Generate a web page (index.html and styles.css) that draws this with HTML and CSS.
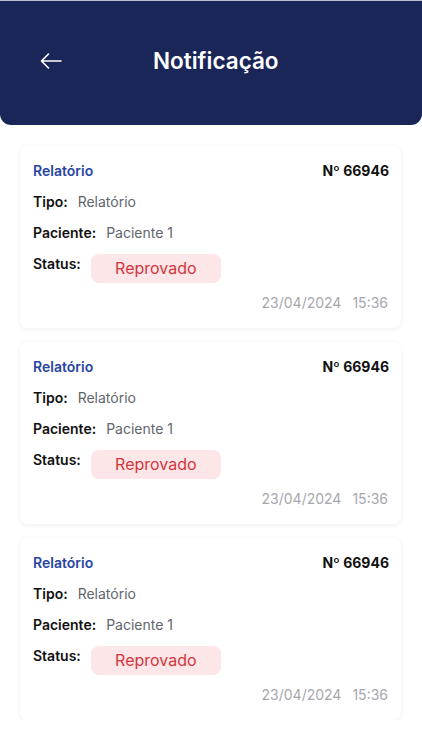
FILE: index.html
```html
<!DOCTYPE html>
<html lang="pt-BR">
<head>
  <meta charset="utf-8" />
  <meta name="viewport" content="width=device-width, user-scalable=no" />
  <title>Notificação</title>
  <link rel="stylesheet" href="styles.css">
</head>
<body>
  <header class="topo">
    <a class="voltar" href="#">
      <svg width="22" height="16" viewBox="0 0 22 16" fill="none" stroke="#fff" stroke-width="1.6" stroke-linecap="round" stroke-linejoin="round">
        <path d="M21 8H1.5M8.5 1L1.5 8l7 7" />
      </svg>
    </a>
    <h1>Notificação</h1>
  </header>

  <div class="lista">
    <div class="card">
      <div class="linha-topo">
        <span class="titulo">Relatório</span>
        <span class="numero">Nº 66946</span>
      </div>
      <div class="linha"><b>Tipo:</b><span>Relatório</span></div>
      <div class="linha"><b>Paciente:</b><span>Paciente 1</span></div>
      <div class="linha"><b>Status:</b><span class="status">Reprovado</span></div>
      <div class="data"><span>23/04/2024</span><span>15:36</span></div>
    </div>

    <div class="card">
      <div class="linha-topo">
        <span class="titulo">Relatório</span>
        <span class="numero">Nº 66946</span>
      </div>
      <div class="linha"><b>Tipo:</b><span>Relatório</span></div>
      <div class="linha"><b>Paciente:</b><span>Paciente 1</span></div>
      <div class="linha"><b>Status:</b><span class="status">Reprovado</span></div>
      <div class="data"><span>23/04/2024</span><span>15:36</span></div>
    </div>

    <div class="card">
      <div class="linha-topo">
        <span class="titulo">Relatório</span>
        <span class="numero">Nº 66946</span>
      </div>
      <div class="linha"><b>Tipo:</b><span>Relatório</span></div>
      <div class="linha"><b>Paciente:</b><span>Paciente 1</span></div>
      <div class="linha"><b>Status:</b><span class="status">Reprovado</span></div>
      <div class="data"><span>23/04/2024</span><span>15:36</span></div>
    </div>
  </div>
</body>
</html>
```

FILE: styles.css
```css
body {
  margin: 0;
  padding: 0;
  background-color: #fff;
  font-family: Inter, "Noto Sans", "Liberation Sans", sans-serif;
  color: #111;
}

.topo {
  height: 125px;
  box-sizing: border-box;
  border-top: 1px solid #b9bfd6;
  background: #1a2657;
  border-radius: 0 0 11px 11px;
  display: flex;
  align-items: center;
  padding: 0 0 5px 40px;
  gap: 91px;
}
.voltar {
  display: flex;
}
.topo h1 {
  margin: 0;
  color: #fff;
  font-size: 22.5px;
  font-weight: 600;
}

.lista {
  display: flex;
  flex-direction: column;
  gap: 14px;
  padding: 21px 21px 0 20px;
}

.card {
  background: #fff;
  border-radius: 8px;
  box-shadow: 0 1px 5px rgba(20, 30, 60, 0.07);
  padding: 15px 12px 15px 13px;
  display: flex;
  flex-direction: column;
  gap: 11px;
  font-size: 14px;
  line-height: 20px;
}

.linha-topo {
  display: flex;
  justify-content: space-between;
}
.titulo {
  color: #2845a3;
  font-weight: 600;
}
.numero {
  font-weight: 700;
}

.linha {
  display: flex;
  align-items: flex-start;
  gap: 10px;
}
.linha b {
  font-weight: 600;
}
.linha span {
  color: #62656c;
}
.linha .status {
  width: 130px;
  height: 29px;
  line-height: 29px;
  text-align: center;
  border-radius: 8px;
  background: #fde6e7;
  color: #d3353c;
  font-size: 16px;
}

.data {
  margin-top: -1px;
  display: flex;
  justify-content: flex-end;
  gap: 11px;
  padding-right: 1px;
  color: #a6a7ad;
}
```
